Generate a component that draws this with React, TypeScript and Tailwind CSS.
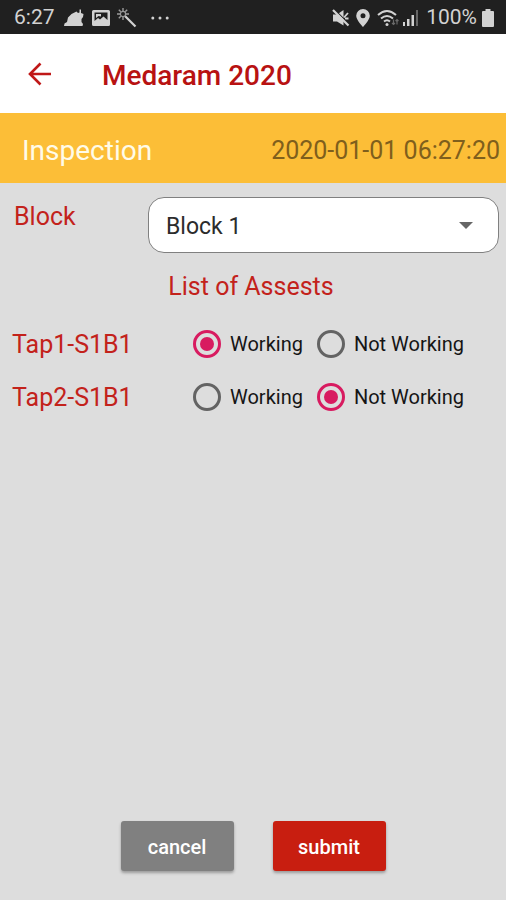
import { useState } from 'react';

type Status = 'Working' | 'Not Working';

const STATUSES: Status[] = ['Working', 'Not Working'];

const initialAssets: { id: string; status: Status }[] = [
  { id: 'Tap1-S1B1', status: 'Working' },
  { id: 'Tap2-S1B1', status: 'Not Working' },
];

function StatusBar() {
  return (
    <div className="h-[34px] shrink-0 bg-[#202020] text-[#d2d2d2] flex items-center justify-between pl-[14px] pr-[12px] pt-px text-[21px]">
      <div className="flex items-center">
        <span className="w-[50px]">6:27</span>
        <svg className="w-5 h-5" viewBox="0 0 20 20" fill="currentColor">
          <path d="M0 18L.5 15.500 3 14 4 9.500 7.500 6 12.500 3.500 14 5 15.500 4.500V1.500H17V5L19.500 6 19 9 17.500 11 17.500 14 19 16 18.500 18Z" />
        </svg>
        <svg className="w-[18px] h-4 ml-[8px]" viewBox="0 0 18 16" fill="currentColor">
          <path fillRule="evenodd" d="M1.500 0H16.500Q18 0 18 1.500V14.500Q18 16 16.500 16H1.500Q0 16 0 14.500V1.500Q0 0 1.500 0ZM2.500 2.500V11L6 8 8 9.500 11.500 6.500 15.500 10V2.500Z" />
          <path d="M4 4H9V6.500L6.500 6 4 8Z" />
        </svg>
        <svg className="w-5 h-5 ml-[7px]" viewBox="0 0 20 20" fill="none" stroke="currentColor">
          <path d="M8 8L18.500 18.500" strokeWidth="2.200" />
          <path d="M6 0V3M6 9V12M0 6H3M9 6H12M1.800 1.800L3.800 3.800M10.200 1.800L8.200 3.800M1.800 10.200L3.800 8.200" stroke="#9a9a9a" strokeWidth="1.400" />
          <circle cx="6" cy="6" r="2.600" stroke="#9a9a9a" strokeWidth="1.200" />
        </svg>
        <svg className="w-[18px] h-1 ml-[14px]" viewBox="0 0 18 4" fill="currentColor">
          <circle cx="1.800" cy="2" r="1.500" />
          <circle cx="9" cy="2" r="1.500" />
          <circle cx="16.200" cy="2" r="1.500" />
        </svg>
      </div>
      <div className="flex items-center">
        <svg className="w-[18px] h-[18px]" viewBox="0 0 18 18">
          <path d="M1 5.500H5L11.500 1V16.500L5 12.500H1Z" fill="currentColor" />
          <path d="M12 8.500L16 4M13 9.500H16.500" stroke="currentColor" strokeWidth="1.800" />
          <path d="M2 0L18 16" stroke="#202020" strokeWidth="1.200" />
          <path d="M1 1L16.500 16.500" stroke="currentColor" strokeWidth="2.200" />
        </svg>
        <svg className="w-[14px] h-[18px] ml-[6px]" viewBox="0 0 14 18" fill="currentColor">
          <path fillRule="evenodd" d="M7 0A6.800 6.800 0 0 0 .2 6.800C.2 11 7 18 7 18S13.800 11 13.800 6.800A6.800 6.800 0 0 0 7 0ZM7 4.300A2.500 2.500 0 1 1 7 9.300 2.500 2.500 0 0 1 7 4.300Z" />
        </svg>
        <svg className="w-[22px] h-[18px] ml-[7px]" viewBox="0 0 22 18" fill="none" stroke="currentColor" strokeWidth="2">
          <path d="M1 6Q10 -2 19 6M4 9.500Q10 4.500 16 9.500M7 12.500Q10 10 13 12.500" />
          <circle cx="10" cy="15.500" r="1.500" fill="currentColor" stroke="none" />
          <path d="M16.500 10.500V15.500M15 14L16.500 15.500 18 14M20 15.500V10.500M18.500 12L20 10.500 21.500 12" stroke="#6a6a6a" strokeWidth="1.200" />
        </svg>
        <svg className="w-4 h-4 ml-[4px]" viewBox="0 0 16 16" fill="currentColor">
          <path d="M0 12H2V16H0ZM4 9H6.500V16H4ZM8.500 5H11V16H8.500Z" />
          <path d="M13 0H15V16H13Z" fill="#666" />
        </svg>
        <span className="ml-[7px]">100%</span>
        <svg className="w-3 h-[18px] ml-[5px]" viewBox="0 0 12 18" fill="currentColor">
          <path d="M3.500 0H8.500V2H11Q12 2 12 3V17Q12 18 11 18H1Q0 18 0 17V3Q0 2 1 2H3.500Z" />
        </svg>
      </div>
    </div>
  );
}

export default function App() {
  const [block, setBlock] = useState('Block 1');
  const [assets, setAssets] = useState(initialAssets);

  const setStatus = (id: string, status: Status) => {
    setAssets((prev) => prev.map((a) => (a.id === id ? { ...a, status } : a)));
  };

  return (
    <div className="min-h-screen bg-[#dddddd] flex flex-col font-['Roboto',sans-serif]">
      <StatusBar />

      <header className="bg-white h-[79px] shrink-0 flex items-center px-7 gap-[50px]">
        <button type="button" aria-label="Back" className="text-[#c01818]">
          <svg className="w-6 h-6" viewBox="0 0 24 24" fill="none" stroke="currentColor" strokeWidth="2.600">
            <path d="M23 12H2.500M12.500 1.500L2 12L12.500 22.500" />
          </svg>
        </button>
        <h1 className="text-[28px] font-medium text-[#b81212] pt-1">Medaram 2020</h1>
      </header>

      <div className="bg-[#fcbe37] h-[70px] shrink-0 flex items-center justify-between pl-[22px] pr-[6px] pt-[6px]">
        <h2 className="text-[28px] text-[#fffbe8]">Inspection</h2>
        <time className="text-[25px] text-[#7f5f1c]">2020-01-01 06:27:20</time>
      </div>

      <main className="flex-1 flex flex-col">
        <div className="flex items-start pl-[14px] pr-[7px] pt-[14px]">
          <label htmlFor="block" className="w-[134px] text-[25px] leading-10 text-[#c3221b]">Block</label>
          <div className="flex-1 grid items-center">
            <select
              id="block"
              value={block}
              onChange={(e) => setBlock(e.target.value)}
              className="col-start-1 row-start-1 appearance-none w-full h-14 bg-white border border-[#808080] rounded-2xl pl-[17px] pt-1 text-[23px] text-[#2c2c2c]"
            >
              <option>Block 1</option>
              <option>Block 2</option>
            </select>
            <svg className="col-start-1 row-start-1 justify-self-end mr-[26px] w-[14px] h-[7px] pointer-events-none" viewBox="0 0 14 7" fill="#666">
              <path d="M0 0H14L7 7Z" />
            </svg>
          </div>
        </div>

        <h3 className="text-center text-[25px] leading-8 text-[#c3221b] pt-[18px] pr-1">List of Assests</h3>

        <div className="pt-[14px]">
          {assets.map((asset) => (
            <div key={asset.id} role="radiogroup" aria-labelledby={asset.id} className="h-[53px] flex items-center pl-[12px]">
              <span id={asset.id} className="w-[181px] text-[25px] text-[#c3221b] pt-0.5">{asset.id}</span>
              <div className="flex gap-[14px]">
                {STATUSES.map((status) => (
                  <label key={status} className="flex items-center gap-[9px] text-[20px] text-[#151515]">
                    <input
                      type="radio"
                      name={asset.id}
                      checked={asset.status === status}
                      onChange={() => setStatus(asset.id, status)}
                      className="appearance-none w-7 h-7 rounded-full border-[3px] border-[#636363] grid place-content-center checked:border-[#d81b60] before:w-[14px] before:h-[14px] before:rounded-full checked:before:bg-[#d81b60]"
                    />
                    {status}
                  </label>
                ))}
              </div>
            </div>
          ))}
        </div>

        <div className="mt-auto flex justify-center gap-[39px] pb-[29px]">
          <button type="button" className="w-[113px] h-[50px] rounded-[3px] bg-[#808080] text-white text-[20px] font-medium pt-px shadow-[0_2px_3px_rgba(0,0,0,0.3)]">
            cancel
          </button>
          <button type="submit" className="w-[113px] h-[50px] rounded-[3px] bg-[#c81e10] text-white text-[20px] font-medium pt-px shadow-[0_2px_3px_rgba(0,0,0,0.3)]">
            submit
          </button>
        </div>
      </main>
    </div>
  );
}
